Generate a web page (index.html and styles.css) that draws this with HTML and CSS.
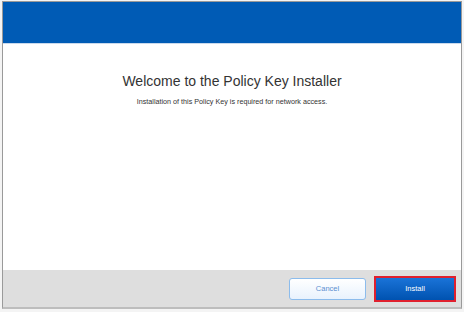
FILE: index.html
```html
<!DOCTYPE html>
<html lang="en">
<head>
    <meta charset="UTF-8">
    <title>Policy Key Installer</title>
    <link rel="stylesheet" href="styles.css">
</head>
<body>

<!-- Installer window -->
<div class="window">
    <div class="header"></div>

    <div class="content">
        <h1>Welcome to the Policy Key Installer</h1>
        <p>Installation of this Policy Key is required for network access.</p>
    </div>

    <div class="footer">
        <button class="btn cancel">Cancel</button>
        <button class="btn install">Install</button>
    </div>
</div>

</body>
</html>
```

FILE: styles.css
```css
/* Basic styling */
body {
    margin: 0;
    width: 464px;
    height: 312px;
    background-color: #f4f4f4;
    font-family: "Liberation Sans", Arial, sans-serif;
    overflow: hidden;
}

/* Window frame */
.window {
    display: flex;
    flex-direction: column;
    margin: 1px 2px 0 2px;
    height: 308px;
    border: 1px solid #9a9a9a;
    border-bottom: 2px solid #bdbdbd;
    background-color: #ffffff;
    box-sizing: border-box;
}

.header {
    height: 41px;
    background-color: #005bb5;
    border-bottom: 1px solid #c9d9ec;
}

.content {
    flex: 1;
    text-align: center;
    padding-top: 29px;
}

.content h1 {
    margin: 0;
    font-size: 14px;
    line-height: 16px;
    font-weight: normal;
    color: #333333;
}

.content p {
    margin: 8px 0 0 0;
    font-size: 7.2px;
    line-height: 9px;
    color: #333333;
}

/* Footer with buttons */
.footer {
    height: 37px;
    background-color: #dedede;
    display: flex;
    justify-content: flex-end;
    align-items: center;
    gap: 8px;
    padding-right: 5px;
}

.btn {
    font-family: "Liberation Sans", Arial, sans-serif;
    font-size: 7.5px;
    height: 22px;
    border-radius: 3px;
    cursor: pointer;
}

.cancel {
    width: 77px;
    color: #5b8fd0;
    background: linear-gradient(#ffffff, #e8f2fd);
    border: 1px solid #8cbcec;
}

.install {
    width: 82px;
    height: 26px;
    color: #ffffff;
    background: linear-gradient(#1a73d8, #0052b0);
    border: 2px solid #e0202e;
    border-radius: 0;
}
```
